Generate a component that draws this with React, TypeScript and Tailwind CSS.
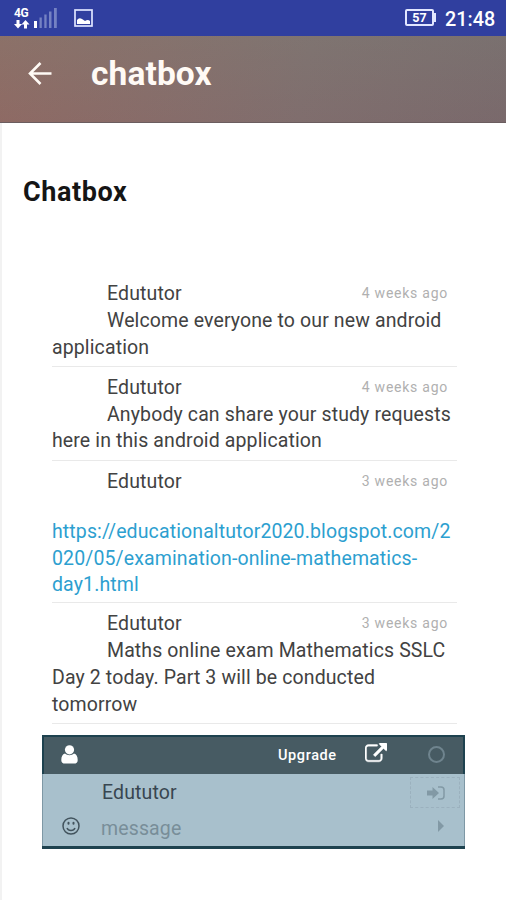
import React from "react";

type Message = { age: string; text?: string; link?: string[] };

const messages: Message[] = [
  { age: "4 weeks ago", text: "Welcome everyone to our new android application" },
  { age: "4 weeks ago", text: "Anybody can share your study requests here in this android application" },
  {
    age: "3 weeks ago",
    link: ["https://educationaltutor2020.blogspot.com/2", "020/05/examination-online-mathematics-", "day1.html"],
  },
  { age: "3 weeks ago", text: "Maths online exam Mathematics SSLC Day 2 today. Part 3 will be conducted tomorrow" },
];

function StatusBar() {
  return (
    <div className="flex h-9 items-start bg-[#303f9f] text-white">
      <div className="ml-[14px] mt-[7px] w-4">
        <div className="h-[11px] text-[12px] leading-[12px] font-bold tracking-[-0.5px]">4G</div>
        <svg className="mt-[2px] block" width="16" height="9" viewBox="0 0 16 9" fill="white">
          <path d="M2.500 0h3v4H8L4 8.500 0 4h2.500zM11.500 0l4 4.500H13v4h-3v-4H7.500z" transform="matrix(1 0 0 1 0 0)" />
        </svg>
      </div>
      <svg className="ml-[4px] mt-[8px]" width="24" height="21" viewBox="0 0 24 21">
        <path d="M0 13h3v7H0z" fill="white" />
        <path d="M5.500 9.500h2.300v10.500H5.500zM10.300 6.500h2.300v13.500h-2.300zM15 3.500h2.500v16.500H15zM20 0h2.800v20H20z" fill="#7582c3" />
      </svg>
      <svg className="ml-[16px] mt-[9px]" width="19" height="18" viewBox="0 0 19 18">
        <rect x="1" y="1" width="17" height="16" fill="none" stroke="#dfe5ff" strokeWidth="1.700" />
        <path d="M3 15v-4q2-3 5-1l3 2q3-2 5 0v3z" fill="white" />
      </svg>
      <div className="flex-1" />
      <div className="mt-[9px] flex h-[17px] w-[29px] items-center justify-center rounded-[2px] border-2 border-[#e2e7ff] pt-px text-[12.5px] leading-none font-bold">57</div>
      <div className="mt-[13px] h-[9px] w-[2px] bg-[#e2e7ff]" />
      <div className="mt-[8px] mr-[10px] ml-[9px] w-[51px] text-[19.800px] leading-[24px] font-medium whitespace-nowrap">21:48</div>
    </div>
  );
}

function Header() {
  return (
    <header className="flex h-[87px] items-start border-b border-b-[#6b5d5f] bg-[linear-gradient(180deg,rgba(120,125,115,0.25)_0%,rgba(120,85,90,0.12)_100%),linear-gradient(100deg,#926d65_0%,#8a6f6b_30%,#817170_60%,#7a6c6e_100%)]">
      <svg className="ml-[28px] mt-[25px]" width="25" height="25" viewBox="0 0 25 25" fill="none" stroke="#fffaf5" strokeWidth="2.600">
        <path d="M23.500 12.500H3M12.500 2L2 12.500 12.500 23" />
      </svg>
      <h1 className="mt-[18px] ml-[38px] text-[33.500px] leading-10 font-bold tracking-[0.100px] text-[#fffaf5]">chatbox</h1>
    </header>
  );
}

function MessageRow({ age, text, link }: Message) {
  return (
    <li className="border-b-[1.5px] border-[#e9e9e9] pt-[8px] pb-[4.4px] text-[19.500px] leading-[26.800px] tracking-[0.120px]">
      <div className="flex justify-between pr-[9px] pl-[55px]">
        <span>Edututor</span>
        <time className="text-[14px] leading-[24px] tracking-[0.750px] text-[#b0b0b0]">{age}</time>
      </div>
      {text && <p className="indent-[55px]">{text}</p>}
      {link && (
        <p className="-mb-[1.5px] pt-[23.5px] text-[#2d9fd0]">
          {link.map((part) => (
            <span key={part} className="block whitespace-nowrap">{part}</span>
          ))}
        </p>
      )}
    </li>
  );
}

function Composer() {
  return (
    <section className="mt-[11px] ml-[42px] w-[423px] border-y-2 border-b-[3px] border-[#1e424f] bg-[#a8c0cc]">
      <div className="flex h-[37px] items-center border-x-2 border-[#1e424f] bg-[#475b63] text-white">
        <svg className="mb-[2px] ml-[17px]" width="17" height="19" viewBox="0 0 17 19" fill="white">
          <circle cx="8.500" cy="4.800" r="4.600" />
          <path d="M4 8.500C1.500 9 .3 11.500.3 15c0 2 1 3.500 3 3.500h10.400c2 0 3-1.500 3-3.500 0-3.500-1.200-6-3.700-6.500C10.500 10.700 6.500 10.700 4 8.500z" />
        </svg>
        <span className="mt-[2px] ml-[200px] w-[60px] text-[14.500px] font-medium tracking-[0.600px] whitespace-nowrap">Upgrade</span>
        <svg className="mb-[3px] ml-[27px]" width="22" height="22" viewBox="0 0 1792 1792" fill="white" stroke="white" strokeWidth="35">
          <path d="M1408 928v320q0 119-84.500 203.500t-203.500 84.500h-832q-119 0-203.500-84.500t-84.500-203.500v-832q0-119 84.500-203.500t203.500-84.500h704q14 0 23 9t9 23v64q0 14-9 23t-23 9h-704q-66 0-113 47t-47 113v832q0 66 47 113t113 47h832q66 0 113-47t47-113v-320q0-14 9-23t23-9h64q14 0 23 9t9 23zm384-864v512q0 26-19 45t-45 19-45-19l-176-176-652 652q-10 10-23 10t-23-10l-114-114q-10-10-10-23t10-23l652-652-176-176q-19-19-19-45t19-45 45-19h512q26 0 45 19t19 45z" />
        </svg>
        <div className="mb-[2px] ml-[41px] h-[17px] w-[17px] rounded-full border-[2.5px] border-[#6f848e]" />
      </div>
      <div className="flex h-[36px] items-center border-x border-[#7e98a5] pl-[59px] text-[19.500px] tracking-[0.130px] text-[#384650]">
        <span className="flex-1 pt-[2px]">Edututor</span>
        <div className="mt-[2px] mr-[4px] flex h-[31px] w-[50px] items-center justify-center border border-dashed border-[#9bb1be]">
          <svg className="ml-[2px]" width="18" height="14" viewBox="0 0 18 14">
            <path d="M0 4.500h5.500V1l6.500 6-6.500 6V9.500H0z" fill="#8299a5" />
            <path d="M11 1h3q3 0 3 3v6q0 3-3 3h-3" fill="none" stroke="#8299a5" strokeWidth="1.500" />
          </svg>
        </div>
      </div>
      <div className="flex h-[36px] items-center border-x border-[#7e98a5] text-[19.500px] tracking-[0.130px] text-[#788e99]">
        <svg className="mb-1 ml-[19px]" width="18" height="18" viewBox="0 0 18 18" fill="none" stroke="#42535d" strokeWidth="1.500">
          <circle cx="9" cy="9" r="8" />
          <path d="M5 11q1 2.500 4 2.500t4-2.500" />
          <path d="M6.500 5.800v1M11.500 5.800v1" strokeWidth="2" strokeLinecap="round" />
        </svg>
        <span className="ml-[21px] flex-1 pt-[2px]">message</span>
        <svg className="mr-[20px] mb-1" width="6" height="12" viewBox="0 0 6 12" fill="#8299a5">
          <path d="M0 0l6 6-6 6z" />
        </svg>
      </div>
    </section>
  );
}

export default function App() {
  return (
    <div className="h-[900px] w-[506px] overflow-hidden bg-white font-[Roboto,sans-serif] text-[#424242]">
      <StatusBar />
      <Header />
      <main className="h-[777px] border-l-2 border-[#f2f2f2]">
        <div className="-ml-[2px]">
          <h2 className="pt-[51px] pl-[23px] text-[27px] leading-9 font-bold tracking-[0.600px] text-[#151515]">Chatbox</h2>
          <ul className="mt-[63px] ml-[52px] w-[405px]">
            {messages.map((message, index) => (
              <MessageRow key={index} {...message} />
            ))}
          </ul>
          <Composer />
        </div>
      </main>
    </div>
  );
}
